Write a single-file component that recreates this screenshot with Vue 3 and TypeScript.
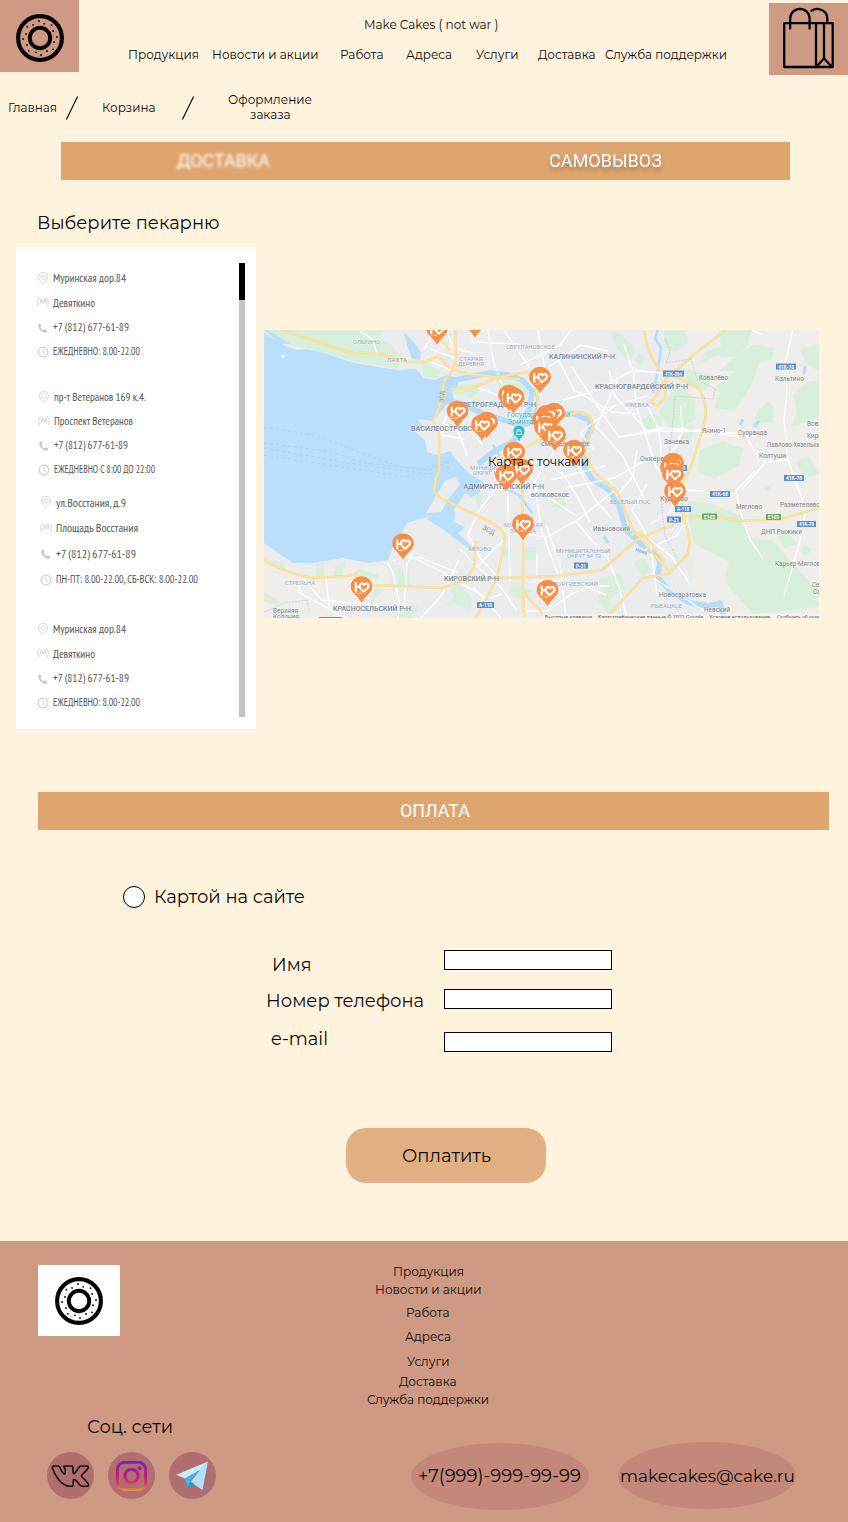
<script setup lang="ts">
import { h, type FunctionalComponent } from 'vue'

interface LabelProps {
  text: string
  w: number
  size?: number
  color?: string
  font?: string
}

// Single line of text fitted to a fixed width; the baseline sits 15px below the top.
const Label: FunctionalComponent<LabelProps> = (p) =>
  h('svg', { width: p.w, height: 20, style: { display: 'block', overflow: 'visible', flex: 'none' } }, [
    h(
      'text',
      {
        x: 0,
        y: 15,
        'font-size': p.size ?? 12.4,
        'font-family': p.font ?? "Montserrat, Inter, 'Open Sans', sans-serif",
        fill: p.color ?? '#0c0a09',
        textLength: p.w,
        lengthAdjust: 'spacingAndGlyphs',
      },
      p.text,
    ),
  ])
Label.props = ['text', 'w', 'size', 'color', 'font']

const links = [
  { text: 'Продукция', w: 71 },
  { text: 'Новости и акции', w: 106.5 },
  { text: 'Работа', w: 43.5 },
  { text: 'Адреса', w: 46 },
  { text: 'Услуги', w: 42.5 },
  { text: 'Доставка', w: 57.5 },
  { text: 'Служба поддержки', w: 122 },
]

const roboto = 'Roboto, sans-serif'
const narrow = "'PT Sans Narrow', 'Open Sans', sans-serif"
const icons = ['pin', 'metro', 'phone', 'clock']

const murino = [
  { text: 'Муринская дор.84', w: 73 },
  { text: 'Девяткино', w: 42 },
  { text: '+7 (812) 677-61-89', w: 76 },
  { text: 'ЕЖЕДНЕВНО: 8.00-22.00', w: 87 },
]
const shops = [
  { kind: 'first', rows: murino },
  {
    kind: 'second',
    rows: [
      { text: 'пр-т Ветеранов 169 к.4.', w: 92 },
      { text: 'Проспект Ветеранов', w: 79 },
      { text: '+7 (812) 677-61-89', w: 74 },
      { text: 'ЕЖЕДНЕВНО С 8:00 ДО 22:00', w: 101 },
    ],
  },
  {
    kind: 'third',
    rows: [
      { text: 'ул.Восстания, д.9', w: 70 },
      { text: 'Площадь Восстания', w: 82 },
      { text: '+7 (812) 677-61-89', w: 80 },
      { text: 'ПН-ПТ: 8.00-22.00, СБ-ВСК: 8.00-22.00', w: 142 },
    ],
  },
  { kind: 'fourth', rows: murino },
]

const sprinkles = [
  [-1, -17], [4.2, -14.2], [11.5, -12.8], [13.2, -7], [17, -1], [14, 4.2], [13, 11.3], [7, 13],
  [1, 17], [-4, 14.3], [-11.2, 12.8], [-13, 7], [-17, 1], [-14, -4], [-12.7, -11.3], [-7, -13.1],
]

const pins = [
  [437, 344.5], [475, 337.5], [457.5, 427], [487, 438], [482, 440.5], [509, 411], [513.5, 413.5],
  [540, 393], [554, 429], [547, 431], [543, 436], [545, 443], [555, 451], [574, 466],
  [514, 468], [522, 485], [506, 491], [673, 479], [671, 483], [673, 490], [675, 507],
  [523, 540], [403, 559.5], [361.5, 602.5], [547.5, 606],
]

// x, y, width, text, size, colour
type Place = [number, number, number, string, number, string]
const slate = '#78879a'
const pale = '#9aa7b8'
const grey = '#7d8084'
const places: Place[] = [
  [353, 344, 27, 'ОЛЬГИНО', 5.2, pale],
  [387, 362, 20, 'ЛАХТА', 5.2, pale],
  [459, 361, 24, 'СТАРАЯ', 5, pale],
  [458, 366, 26, 'ДЕРЕВНЯ', 5, pale],
  [506, 349, 49, 'СВЕТЛАНОВСКОЕ', 5, pale],
  [549, 358.5, 66, 'КАЛИНИНСКИЙ Р-Н', 7, slate],
  [595, 388.5, 93, 'КРАСНОГВАРДЕЙСКИЙ Р-Н', 7, slate],
  [625, 407, 24, 'РЖЕВКА', 5, pale],
  [411, 431, 76, 'ВАСИЛЕОСТРОВСКИЙ', 6.6, slate],
  [462, 406.5, 74, 'ПЕТРОГРАДСКИЙ Р-Н', 6.5, slate],
  [507, 417, 63, 'Государственный', 7.5, '#4ab4bc'],
  [507, 424, 32, 'Эрмитаж', 7.5, '#4ab4bc'],
  [541, 446, 49, 'СМОЛЬНИНСКОЕ', 5.5, slate],
  [470, 470, 55, 'МУНИЦИПАЛЬНЫЙ', 5.3, pale],
  [473, 475, 30, 'ОКРУГ №7', 5.3, pale],
  [463.5, 488.5, 80.5, 'АДМИРАЛТЕЙСКИЙ Р-Н', 7, slate],
  [531, 496.5, 38, 'ВОЛКОВСКОЕ', 6, slate],
  [610, 504, 42, 'ВЕСЁЛЫЙ ПОС.', 5, pale],
  [504, 527, 39, 'МОСКОВСКАЯ', 5, pale],
  [510, 533, 26, 'ЗАСТАВА', 5, pale],
  [593, 531, 37, 'Ивановский', 6.3, grey],
  [468, 551, 23, 'АВТОВО', 5, pale],
  [556, 553, 54, 'МУНИЦИПАЛЬНЫЙ', 5.2, pale],
  [567, 558, 34, 'ОКРУГ № 72', 5.2, pale],
  [444, 581, 55, 'КИРОВСКИЙ Р-Н', 7, slate],
  [550, 586, 48, 'ГЕОРГИЕВСКИЙ', 5.2, pale],
  [285, 584.5, 30, 'СТРЕЛЬНА', 5.2, pale],
  [273, 613, 25, 'Верхняя', 6.4, grey],
  [273, 619, 26, 'Колония', 6.4, grey],
  [333, 610.5, 78, 'КРАСНОСЕЛЬСКИЙ Р-Н', 7, slate],
  [699, 380, 29, 'Ковалёво', 6.6, grey],
  [775, 380.5, 29, 'Кальтино', 6.6, grey],
  [702, 432.5, 24, 'Янино-1', 6.6, grey],
  [738, 434.5, 29, 'Суоранда', 6.6, grey],
  [664, 444, 25, 'Заневка', 6.6, grey],
  [640, 460.5, 37, 'Оккервиль', 6.6, grey],
  [767, 447, 53, 'Павлово Хязельки', 6.6, grey],
  [759, 458, 27, 'Колтуши', 6.6, grey],
  [807, 426, 15, 'Вовк', 6.6, grey],
  [807, 438, 15, 'Кирп', 6.6, grey],
  [660, 501, 28, 'Кудрово', 6.6, grey],
  [736, 509, 26, 'Мяглово', 6.6, grey],
  [780, 507, 40, 'Разметелево', 6.6, grey],
  [761, 533.5, 41, 'ДНП Рыжики', 6.6, grey],
  [775, 565.5, 49, 'Карьер-Мяглово', 6.6, grey],
  [659, 597, 47, 'Новосаратовка', 6.6, grey],
  [651, 608, 31, 'РЫБАЦКОЕ', 5.2, pale],
  [704, 612, 26, 'Невский', 6.6, grey],
  [812, 587, 12, 'Сем', 6.6, grey],
  [813, 594, 12, 'Сам', 6.6, grey],
]

const shields: [number, number, number, string, string][] = [
  [663, 370.5, 21, '41К-064', '#5a8fd0'],
  [776, 363.5, 20, '41К-78', '#5a8fd0'],
  [784, 475, 20, '41К-78', '#5a8fd0'],
  [710, 491, 20, '41К-68', '#5a8fd0'],
  [675, 506, 16, 'А-118', '#5a8fd0'],
  [667, 516.5, 14, 'Р-21', '#5a8fd0'],
  [702, 513.5, 15, 'Е105', '#6aaa62'],
  [766, 514, 15, 'Е105', '#6aaa62'],
  [797, 521, 19, '41К-78', '#5a8fd0'],
  [574, 562.5, 14, 'Р-21', '#5a8fd0'],
  [477, 602, 17, 'А-118', '#5a8fd0'],
  [672, 465, 15, 'А-118', '#5a8fd0'],
]

const greens = [
  'M264 330H384L378 338L390 344L401 356L398 368L365 364L327 354L305 348L281 342L264 333Z',
  'M420 362L440 370L436 379L424 376Z', 'M428 330L440 330L450 336L436 344Z',
  'M450 386L476 383L481 390L472 398L458 394Z', 'M496 379L520 384L529 393L518 397L500 388Z',
  'M447 385L461 386L459 395L446 394Z', 'M474 398L491 404L482 409L470 406Z',
  'M612 331L622 334L636 352L628 362L615 345Z', 'M664 330L684 330L688 342L676 352L664 347Z',
  'M688 369L712 376L706 391L684 386Z', 'M676 382L694 397L696 419L672 432L659 413Z',
  'M719 330L752 330L746 348L735 357L716 356L699 364L705 352L721 346Z',
  'M754 344L774 348L772 359L759 363L752 384L735 411L714 408L720 393L713 388L736 371L719 371L732 359Z',
  'M800 349L819 344V371L807 365Z', 'M793 395L807 382L819 380V417L790 428L797 412Z',
  'M758 410L768 401L774 406L773 422L752 426Z', 'M699 450L723 441L743 449L738 466L714 479L698 472Z',
  'M796 462L809 456L819 473L805 479Z', 'M725 488L740 490L727 494Z', 'M764 487L773 484L768 491Z',
  'M688 501L709 503L742 516L750 538L774 541L791 562L817 590L819 607L753 614L724 581L729 562L694 544L689 521Z',
  'M804 545L812 549L806 557L800 550Z', 'M784 527L797 544L784 548L777 535Z',
  'M316 563H324V577H316Z', 'M335 567L346 560L342 577L333 578Z', 'M353 572L360 569L379 575L376 579L356 579Z',
  'M398 569H410V586H397Z', 'M374 588L385 590L375 598L371 611H367L373 596Z',
  'M272 560L284 564L286 572L269 565Z', 'M264 592L280 601L276 605L264 602Z',
  'M397 609L418 605L414 618H395Z', 'M450 589L458 583L472 598L470 610L456 604L442 606L454 598Z',
  'M525 547H536V560H524Z', 'M501 547H511V558H503Z', 'M510 585L533 590L522 599L509 595Z',
  'M598 578L620 574L625 588L608 601Z', 'M600 592L618 611L610 614L598 603Z',
  'M549 498L563 497L567 506L556 511Z', 'M474 497L484 492L479 509Z', 'M642 421L651 413L664 419L659 426L647 431Z',
  'M688 424L695 425L690 445L681 440Z', 'M635 360L640 353L646 358L640 366Z', 'M633 562L645 558L650 570L642 577Z',
]

const minor = [
  'M360 331L373 340L377 355M424 350L430 339L435 330M424 360L458 372M430 349L458 359M447 333L456 353M440 344L476 354',
  'M488 330L493 360L504 390M471 330L472 342L519 344M504 330L538 380M538 330L546 376M520 365L560 345L571 330',
  'M549 367L581 345L608 351M563 400L596 391L633 370L670 374M572 367L600 410L647 396M594 402L619 437L656 431L708 431M557 357L574 390L612 412L636 414',
  'M609 370L615 396L650 434M633 367L636 405L656 467L672 481M624 344L631 367M618 380L596 427L622 455L646 502',
  'M640 432L664 428L700 431L745 434L756 454L766 462M752 330L763 335M788 460L806 510L800 541L784 596M793 330L785 364L787 391L784 420L788 460L766 462L742 489',
  'M680 470L688 490L704 491M637 450L633 476L617 496M669 460L682 432L681 405M647 405L659 430L662 460M697 430L740 437M617 404L580 433L594 450',
  'M478 512L497 487L503 460M507 474L509 538L510 581M520 460L535 484L541 529L559 577M535 482L551 499L575 515M503 531L547 537L579 519L615 490M575 520L598 548L607 556L619 587L627 618',
  'M478 512L468 535L480 558L498 577M477 567L500 586L517 611M460 549L477 567L490 553L506 538M522 528L523 618M537 553L537 577M546 525L560 565L566 618',
  'M388 563L393 573L400 605L398 618M393 561L408 555L458 580M407 562L404 607M326 578L330 612M302 581L298 592L346 618M300 576L322 600L378 605',
  'M459 560L442 595L421 618M460 583L489 599L502 594M473 587L487 602L501 618M530 582L550 580L585 586L606 595M526 599L526 611L548 611L571 594L593 586L609 586',
  'M547 461L565 477L578 498L590 522M577 464L594 498L611 518M558 447L542 468L529 494M551 480L605 466M566 488L614 478L648 459',
  'M644 535L672 557L690 584M647 484L632 510L650 540L657 596M645 550L676 536L687 521M650 576L706 612M755 471L736 491L741 514L750 540L763 558M650 524L670 512L675 500',
  'M419 557L436 564L457 572M408 561L413 551M446 424L459 433L467 456M449 405L441 435L464 439M465 407L463 424L483 445M478 388L500 396L524 397',
]

const roads = [
  'M264 324Q294 333 327 345T360 352L384 355L405 362L425 362L438 356L450 368M455 330L456 362L450 374Q440 382 444 394Q435 419 433 421L439 433V470Q431 491 437 496L469 512Q503 526 505 536L502 555L497 578L476 618',
  'M452 369L467 374L498 377L528 372Q536 383 537 397L541 415L557 420L578 412Q591 412 593 427L587 441Q582 456 596 474L617 491L633 530Q647 544 648 548L670 572M522 461L523 531L523 592L524 618',
  'M264 560Q290 575 314 578L346 576L356 575L374 585L443 588L459 582L500 578L556 576L602 570L638 539L672 525L684 516L716 517L742 521L781 519L819 508',
  'M644 330Q648 358 661 370L696 386Q710 401 704 425L692 464L680 488L684 520Q693 541 687 555L668 574L643 578L630 592L607 617',
  'M726 330L697 352L667 378L651 402L657 406L665 398L667 377M631 536Q638 528 650 542L665 562M433 330L450 350M476 541L474 567L463 583',
  'M523 592L545 616M451 389L472 388L496 378L520 379M552 417L545 438L526 447L493 460',
]
</script>

<template>
  <div class="page">
    <svg class="defs" width="0" height="0">
      <defs>
        <symbol id="donut" viewBox="-24 -24 48 48">
          <circle r="21.9" fill="none" stroke="#000" stroke-width="4.1" />
          <circle r="10.2" fill="none" stroke="#000" stroke-width="3.9" />
          <circle v-for="(s, i) in sprinkles" :key="i" :cx="s[0]" :cy="s[1]" r=".9" />
        </symbol>
        <symbol id="pin" viewBox="0 0 12 12">
          <path d="M6 .4C3 .4 1.500 2.300 1.500 4.900c0 2.800 2.500 4.900 4.500 6.800C8 9.800 10.500 7.700 10.500 4.900 10.500 2.300 9 .4 6 .4Z" fill="none" stroke="#d2d2d2" stroke-width=".9" />
          <circle cx="6" cy="4.900" r="2.200" fill="none" stroke="#d2d2d2" stroke-width=".8" />
        </symbol>
        <symbol id="metro" viewBox="0 0 12 12">
          <path d="M2.600 1.300Q-1 5.500 1.900 10.200M9.400 1.300Q13 5.500 10.100 10.200M2.900 8L4.300 2.500L6.400 7.300L8.200 2.400L9.100 7.500" fill="none" stroke="#cdcdcd" stroke-width=".9" />
        </symbol>
        <symbol id="phone" viewBox="0 0 12 12">
          <path d="M1.300 2.300L3.100 1.300L4.500 4.100L3.300 5.200Q4.500 7.500 6.600 8.300L7.800 7.200L10.400 8.800L9.600 10.400Q8.300 11.200 5.700 9.900Q.8 7 1.300 2.300Z" fill="#c8c8c8" />
        </symbol>
        <symbol id="clock" viewBox="0 0 12 12">
          <circle cx="6" cy="6" r="4.900" fill="none" stroke="#cdcdcd" stroke-width="1.100" />
          <path d="M6 2.900V6.300L8.200 7.600" fill="none" stroke="#c6c6c6" stroke-width=".9" />
        </symbol>
      </defs>
    </svg>

    <header class="header">
      <a class="logo"><svg width="48" height="48"><use href="#donut" /></svg></a>
      <div class="head-mid">
        <Label class="title" text="Make Cakes ( not war )" :w="134.5" />
        <nav class="nav">
          <Label v-for="l in links" :key="l.text" :text="l.text" :w="l.w" />
        </nav>
      </div>
      <a class="bag">
        <svg width="79" height="72" fill="none" stroke="#000" stroke-width="2.300" stroke-linejoin="round">
          <path d="M15.200 20.200H63.700V64H15.200ZM47 20.200V64M55 20.200V56M47.500 63.500L55 55.500L62.700 63.500" />
          <path d="M21.200 25.500V15.500A9.700 9.700 0 0 1 40.600 15.500V25.500M42.500 7.900Q47 4.600 52 6.800Q58.300 9.200 58.300 15.500V20" stroke-linecap="round" />
        </svg>
      </a>
    </header>

    <nav class="crumbs">
      <Label text="Главная" :w="49" />
      <svg class="slash" width="12" height="24"><path d="M.4 23.500L11.600.5" stroke="#000" stroke-width="1.100" /></svg>
      <Label text="Корзина" :w="53.5" />
      <svg class="slash" width="12" height="24"><path d="M.4 23.500L11.600.5" stroke="#000" stroke-width="1.100" /></svg>
      <div class="current">
        <Label text="Оформление" :w="84" />
        <Label text="заказа" :w="40.5" />
      </div>
    </nav>

    <div class="tabs">
      <Label class="tab-off" text="ДОСТАВКА" :w="93" :size="18" color="#fff" :font="roboto" />
      <Label class="tab-on" text="САМОВЫВОЗ" :w="113" :size="18" color="#fff" :font="roboto" />
    </div>

    <Label class="heading" text="Выберите пекарню" :w="182.5" :size="18.2" />

    <main class="pickup">
      <section class="shops">
        <div class="list">
          <div v-for="s in shops" :key="s.kind" class="shop" :class="s.kind">
            <div v-for="(r, i) in s.rows" :key="i" class="row">
              <svg class="ico" :class="icons[i]" width="12" height="12"><use :href="'#' + icons[i]" /></svg>
              <Label :text="r.text" :w="r.w" :size="i === 3 ? 10.6 : 11.4" color="#555" :font="narrow" />
            </div>
          </div>
        </div>
        <div class="scroll"><div class="thumb"></div></div>
      </section>

      <svg class="map" width="555" height="288" viewBox="264 330 555 288" font-family="Roboto, sans-serif">
        <rect x="264" y="330" width="555" height="288" fill="#ebecee" />
        <path d="M690 330H819V618H720L690 585L694 560L680 535L687 490L705 420L680 385Z M264 560L300 570L388 566L392 603L350 618H264Z" fill="#f0eeea" />
        <path v-for="g in greens" :key="g" :d="g" fill="#d8f0db" />
        <path
          d="M264 333L283 345L297 350L307 349L327 354L350 362L367 365L383 368L400 370L415 369L420 373L423 378L435 380L447 375L458 378V386L452 392L454 399L448 404L440 412L434 421L417 419L424 426L414 431L425 440L427 452L437 455L450 451L459 463L470 474L483 482L479 494L463 500L448 514L427 517L407 523L393 547L388 560L370 563L343 558L313 563L293 563L277 552L264 543Z"
          fill="#b9dffc"
        />
        <path d="M404 333L414 342L421 352L420 360L412 359L407 345ZM264 330H268L290 344L280 344Z" fill="#b9dffc" />
        <path d="M426 518L443 512L450 520L465 527L458 533L477 552L469 549L444 530Z M444 496L457 508L453 523L441 511Z" fill="#b9dffc" />
        <path d="M426 513L445 481L455 477L460 484L448 500L441 512ZM453 511L465 493L470 496L461 515Z" fill="#ebecee" />
        <circle cx="283" cy="356.500" r="2" fill="#eef0ef" />
        <g fill="none" stroke="#b5dcfa" stroke-linejoin="round">
          <path d="M443 383L460 379L490 373L508 375L522 380L532 391L530 408L519 425L514 441L496 450L478 464M445 400L465 405L482 413L507 421L521 426L541 419L554 413L574 414L589 420L591 430L584 443L584 466L592 479L609 490L619 506L626 530L641 544L656 554L660 563L657 577L670 591L690 603L708 606L720 603L724 618" stroke-width="5.500" />
          <path d="M658 330L655 338L661 348L658 370L653 393M528 387L538 397L534 420M493 445L505 465L520 478M532 513L520 496L505 488" stroke-width="2.500" />
          <path d="M740 425L743 419M759 421L754 427M805 366L804 374M604 536L608 543" stroke-width="3" />
        </g>
        <g fill="none" stroke="#a3cdec" stroke-width=".7" stroke-dasharray="3 3">
          <path d="M264 428Q310 432 336 443T393 464T451 459M264 443L327 451L365 463L429 470L454 460M264 448L347 463L429 474L451 467M264 455L322 464L414 478" />
        </g>
        <path v-for="m in minor" :key="m" :d="m" fill="none" stroke="#fff" stroke-width="1.300" stroke-linejoin="round" />
        <path v-for="r in roads" :key="r" :d="r" fill="none" stroke="#f6d992" stroke-width="2.500" stroke-linejoin="round" />
        <path v-for="r in roads" :key="r + 'in'" :d="r" fill="none" stroke="#fde5a0" stroke-width="1.500" stroke-linejoin="round" />
        <path d="M665 338L670 352L666 363L691 359L697 379L715 389L713 399L675 396L672 430L668 462M661 500L665 535L678 560M264 612L284 603L307 600L309 612" fill="none" stroke="#c4c4c8" stroke-width=".7" stroke-dasharray="2 1" />
        <text
          v-for="(p, i) in places"
          :key="i"
          :x="p[0]"
          :y="p[1]"
          :textLength="p[2]"
          lengthAdjust="spacingAndGlyphs"
          :font-size="p[4]"
          :fill="p[5]"
          :font-weight="p[5] === slate ? 500 : 400"
          class="place"
        >{{ p[3] }}</text>
        <text x="482" y="529" font-size="6.500" fill="#9b8a68" transform="rotate(28 482 529)">ЗСД</text>
        <text x="443.500" y="402" font-size="5.500" fill="#9b8a68" transform="rotate(-88 443.500 402)">ЗСД</text>
        <text x="635" y="551" font-size="5" fill="#5a9ed0" transform="rotate(18 635 551)">Нева</text>
        <g v-for="(s, i) in shields" :key="'s' + i">
          <rect :x="s[0]" :y="s[1]" :width="s[2]" height="6" rx=".6" :fill="s[4]" />
          <text :x="s[0] + 2" :y="s[1] + 5" :textLength="s[2] - 4" lengthAdjust="spacingAndGlyphs" font-size="5.300" font-weight="700" fill="#fff">{{ s[3] }}</text>
        </g>
        <path d="M319 617H342V618H319Z" fill="#5a8fd0" />
        <path d="M519 442Q518 437 514.500 435Q511.500 429 516 426.500Q520 424.500 523.500 428Q526 432 522.500 436Q520 438 519 442Z" fill="#2fbacb" />
        <path d="M516.500 431H521.500V434.500H516.500ZM517.500 429.500H520.500" fill="none" stroke="#e8feff" stroke-width=".9" />
        <g v-for="(p, i) in pins" :key="'p' + i" :transform="`translate(${p[0]} ${p[1]})`">
          <path d="M0 .3Q-1.500-3-7-8.500Q-10.800-12-10.800-15.800A10.800 10.500 0 0 1 10.800-15.800Q10.800-12-7 -8.500H7Q1.500-3 0 .3Z" fill="#f98e46" />
          <path d="M10.800-15.800Q10.800-12 7-8.500L0-7V-16Z" fill="#f98e46" />
          <path d="M-5.700-20.300V-10.300M-4.500-15.500H-1.500M2-10.700L-1.300-14.300Q-3-17-.4-19Q1.600-19.500 2.400-17.700Q4-19.700 6.200-18.500Q8-16.800 6.200-14.500Z" fill="none" stroke="#fff" stroke-width="2.100" stroke-linejoin="round" />
        </g>
        <rect x="543" y="614" width="276" height="4" fill="#f5f5f3" opacity=".8" />
        <g font-size="6" fill="#555">
          <text x="545" y="619.300" textLength="47" lengthAdjust="spacingAndGlyphs">Быстрые клавиши</text>
          <text x="598" y="619.300" textLength="105" lengthAdjust="spacingAndGlyphs">Картографические данные © 2021 Google</text>
          <text x="709" y="619.300" textLength="61" lengthAdjust="spacingAndGlyphs">Условия использования</text>
          <text x="777" y="619.300" textLength="50" lengthAdjust="spacingAndGlyphs">Сообщить об ошибке</text>
        </g>
        <text x="488" y="466" font-size="12.400" font-family="Montserrat, Inter, sans-serif" textLength="101" lengthAdjust="spacingAndGlyphs" fill="#0c0a09">Карта с точками</text>
      </svg>
    </main>

    <div class="pay-bar">
      <Label text="ОПЛАТА" :w="70" :size="18" color="#fff" :font="roboto" />
    </div>

    <label class="method">
      <span class="radio"></span>
      <Label text="Картой на сайте" :w="151" :size="18.2" />
    </label>

    <form class="form" @submit.prevent>
      <Label class="name" text="Имя" :w="39.5" :size="18.2" />
      <input type="text" />
      <Label class="tel" text="Номер телефона" :w="158" :size="18.2" />
      <input type="text" />
      <Label class="mail" text="e-mail" :w="57" :size="18.2" />
      <input type="text" />
    </form>

    <button class="pay" type="button"><Label text="Оплатить" :w="89" :size="18.2" /></button>

    <footer class="footer">
      <div class="foot-left">
        <div class="foot-logo"><svg width="48" height="48"><use href="#donut" /></svg></div>
        <Label class="soc-title" text="Соц. сети" :w="86" :size="18.2" />
        <div class="socials">
          <a class="soc">
            <svg width="47" height="47" fill="none" stroke="#160f10" stroke-width="1.600" stroke-linejoin="round" stroke-linecap="round">
              <path d="M7 14H11Q12.300 14 12.800 15.300Q14.500 20 17 21.800Q18.200 22.500 18.200 20V17.500Q18.200 16 17.200 15.500Q16 14 18 14H24.500Q26 14 26 15.300V20.500Q26.200 22.500 28 20.800Q30.500 18 32.200 15Q32.700 14 34 14H39.500Q42.200 14.100 41 16.300Q38.500 20 34.500 23.500Q34 24.200 35 25Q39 28.500 41 31.500Q42.500 34 40 34.300H35.500Q34 34.300 33 33.200Q30.500 30 28.500 28.200Q26.200 26.500 26.200 29V32.500Q26.200 34.300 24 34.300Q17 34.500 11.500 27.500Q7 21.500 5.500 16.300Q5 14.200 7 14Z" />
            </svg>
          </a>
          <a class="soc">
            <svg width="47" height="47" fill="none">
              <defs>
                <linearGradient id="ig" gradientUnits="userSpaceOnUse" x1="23" y1="9" x2="23" y2="39">
                  <stop offset="0" stop-color="#7024c4" /><stop offset=".3" stop-color="#a31b9c" />
                  <stop offset=".55" stop-color="#c8197c" /><stop offset=".75" stop-color="#d83b62" />
                  <stop offset="1" stop-color="#e09a35" />
                </linearGradient>
              </defs>
              <rect x="9.400" y="10.400" width="28.200" height="27.200" rx="7" stroke="url(#ig)" stroke-width="2.900" />
              <circle cx="23.500" cy="24" r="6.600" stroke="url(#ig)" stroke-width="2.900" />
              <circle cx="31.500" cy="16.200" r="1.900" fill="#921eaa" />
            </svg>
          </a>
          <a class="soc">
            <svg width="47" height="47">
              <path d="M39 9.500L7.300 22.700L16 26.500L31 18Z" fill="#c7ecfb" />
              <path d="M16 26.500L18.800 36L21.500 28L31 18Z" fill="#3bb9f3" />
              <path d="M39 9.500L33.500 38L21.500 30L31 18Z" fill="#aee3fb" />
              <path d="M18.800 36L25.300 32.300L21.300 29Z" fill="#1b9ae0" />
            </svg>
          </a>
        </div>
      </div>
      <div class="foot-right">
        <nav class="foot-links">
          <Label v-for="l in links" :key="l.text" :text="l.text" :w="l.w" />
        </nav>
        <div class="contacts">
          <div class="contact tel-to"><Label text="+7(999)-999-99-99" :w="163" :size="18" /></div>
          <div class="contact mailto"><Label text="makecakes@cake.ru" :w="175" :size="17.6" /></div>
        </div>
      </div>
    </footer>
  </div>
</template>

<style>
body {
  margin: 0;
  background: #fff3de;
}
</style>

<style scoped>
.page {
  width: 848px;
  height: 1522px;
  display: flex;
  flex-direction: column;
  align-items: flex-start;
  background: #fff3de;
  overflow: hidden;
  font-family: Montserrat, Inter, sans-serif;
}
.page > * { flex: none; }
.page > .defs { display: block; height: 0; }
.header { display: flex; width: 848px; height: 75px; align-items: flex-start; }
.logo, .bag { width: 79px; height: 72px; background: #ce9a83; flex: none; }
.logo { padding: 14px 15px 0 16px; height: 58px; width: 48px; }
.logo svg, .bag svg, .foot-logo svg, .soc svg { display: block; }
.bag { margin-top: 3px; }
.head-mid { flex: 1; }
.title { margin: 14px 0 0 285px; }
.nav {
  display: grid;
  grid-template-columns: 84.500px 127.500px 66px 70px 62px 67px 122px;
  margin: 10px 0 0 48.500px;
}
.crumbs { display: flex; height: 31px; margin-top: 14px; padding-left: 8px; align-items: flex-start; }
.crumbs > svg:not(.slash) { margin-top: 8px; }
.slash { margin: 7px 24px 0 9px; }
.slash ~ .slash { margin: 7px 34.500px 0 26px; }
.current { display: grid; grid-auto-rows: 15px; justify-items: center; }
.tabs {
  display: grid;
  grid-template-columns: 372px 1fr;
  box-sizing: border-box;
  width: 729px;
  height: 38px;
  margin: 22px 0 0 61px;
  padding: 10px 0 0 116px;
  background: #dfa56f;
}
.tab-off { filter: blur(1.500px); }
.tab-on { filter: drop-shadow(0 4px 2px rgba(0, 0, 0, .25)); }
.heading { margin: 34px 0 0 36.500px; }
.pickup { display: flex; width: 848px; height: 482px; margin-top: 13px; }
.shops {
  display: flex;
  justify-content: space-between;
  box-sizing: border-box;
  width: 240px;
  height: 482px;
  margin-left: 16px;
  padding: 16px 11px 12px 21px;
  background: #fff;
}
.list { padding-top: 4px; }
.shop { display: grid; grid-template-rows: 24px 25px 24px 24px; }
.second { grid-template-rows: repeat(4, 24px); margin-top: 22px; padding-left: 1px; }
.third { grid-template-rows: repeat(4, 25.500px); margin-top: 9px; padding-left: 2.500px; }
.fourth { margin-top: 25px; }
.row { display: flex; align-items: center; gap: 4px; }
.row > svg:last-child { margin-top: -4px; }
.metro { margin-top: -3px; }
.pin { margin-top: -3px; }
.phone { margin-top: -1px; }
.scroll { width: 6px; background: #c4c4c4; }
.thumb { height: 37px; background: #000; }
.map { display: block; margin: 83px 0 0 8px; }
.place { paint-order: stroke; stroke: rgba(255, 255, 255, .5); stroke-width: .8px; }
.pay-bar {
  display: flex;
  justify-content: center;
  box-sizing: border-box;
  width: 791px;
  height: 38px;
  margin: 63px 0 0 38px;
  padding: 10px 0 0 3px;
  background: #dfa56f;
}
.method { display: flex; gap: 9px; margin: 56px 0 0 123px; height: 22px; }
.method > svg { margin-top: 2px; }
.radio { width: 20px; height: 20px; border: 1px solid #000; border-radius: 50%; background: #fff; }
.form {
  display: grid;
  grid-template-columns: 178px 168px;
  grid-template-rows: 39px 43px 20px;
  margin: 42px 0 0 266px;
}
.form input { box-sizing: border-box; width: 168px; height: 20px; padding: 0 4px; border: 1px solid #000; background: #fff; border-radius: 0; }
.name { margin: 6px 0 0 6px; }
.tel { margin-top: 3px; }
.mail { margin: -2px 0 0 5px; }
.pay {
  width: 200px;
  height: 55px;
  margin: 76px 0 0 346px;
  padding: 19px 0 0 56px;
  box-sizing: border-box;
  border: 0;
  border-radius: 20px;
  background: #e3b084;
  display: flex;
  align-items: flex-start;
}
.footer { display: grid; grid-template-columns: 366px 1fr; width: 848px; height: 281px; margin-top: 58px; background: #ce9a83; }
.foot-logo { width: 65px; height: 59px; padding: 12px 0 0 17px; margin: 24px 0 0 38px; background: #fff; }
.soc-title { margin: 82px 0 0 87px; }
.socials { display: flex; gap: 14px; margin: 14px 0 0 47px; }
.soc { width: 47px; height: 47px; border-radius: 50%; background: #b06e6e; }
.foot-links {
  display: grid;
  width: 124px;
  margin-top: 20px;
  justify-items: center;
  grid-template-rows: 18px 23px 24px 25px 20px 18px 20px;
}
.contacts { display: flex; gap: 29px; margin: 33px 0 0 45px; }
.contact {
  box-sizing: border-box;
  width: 178px;
  height: 67px;
  padding: 25px 0 0 7px;
  border-radius: 50%;
  background: #c38879;
}
.tel-to { margin-top: 1px; padding-top: 24px; }
.mailto { padding-left: 2px; }
</style>
